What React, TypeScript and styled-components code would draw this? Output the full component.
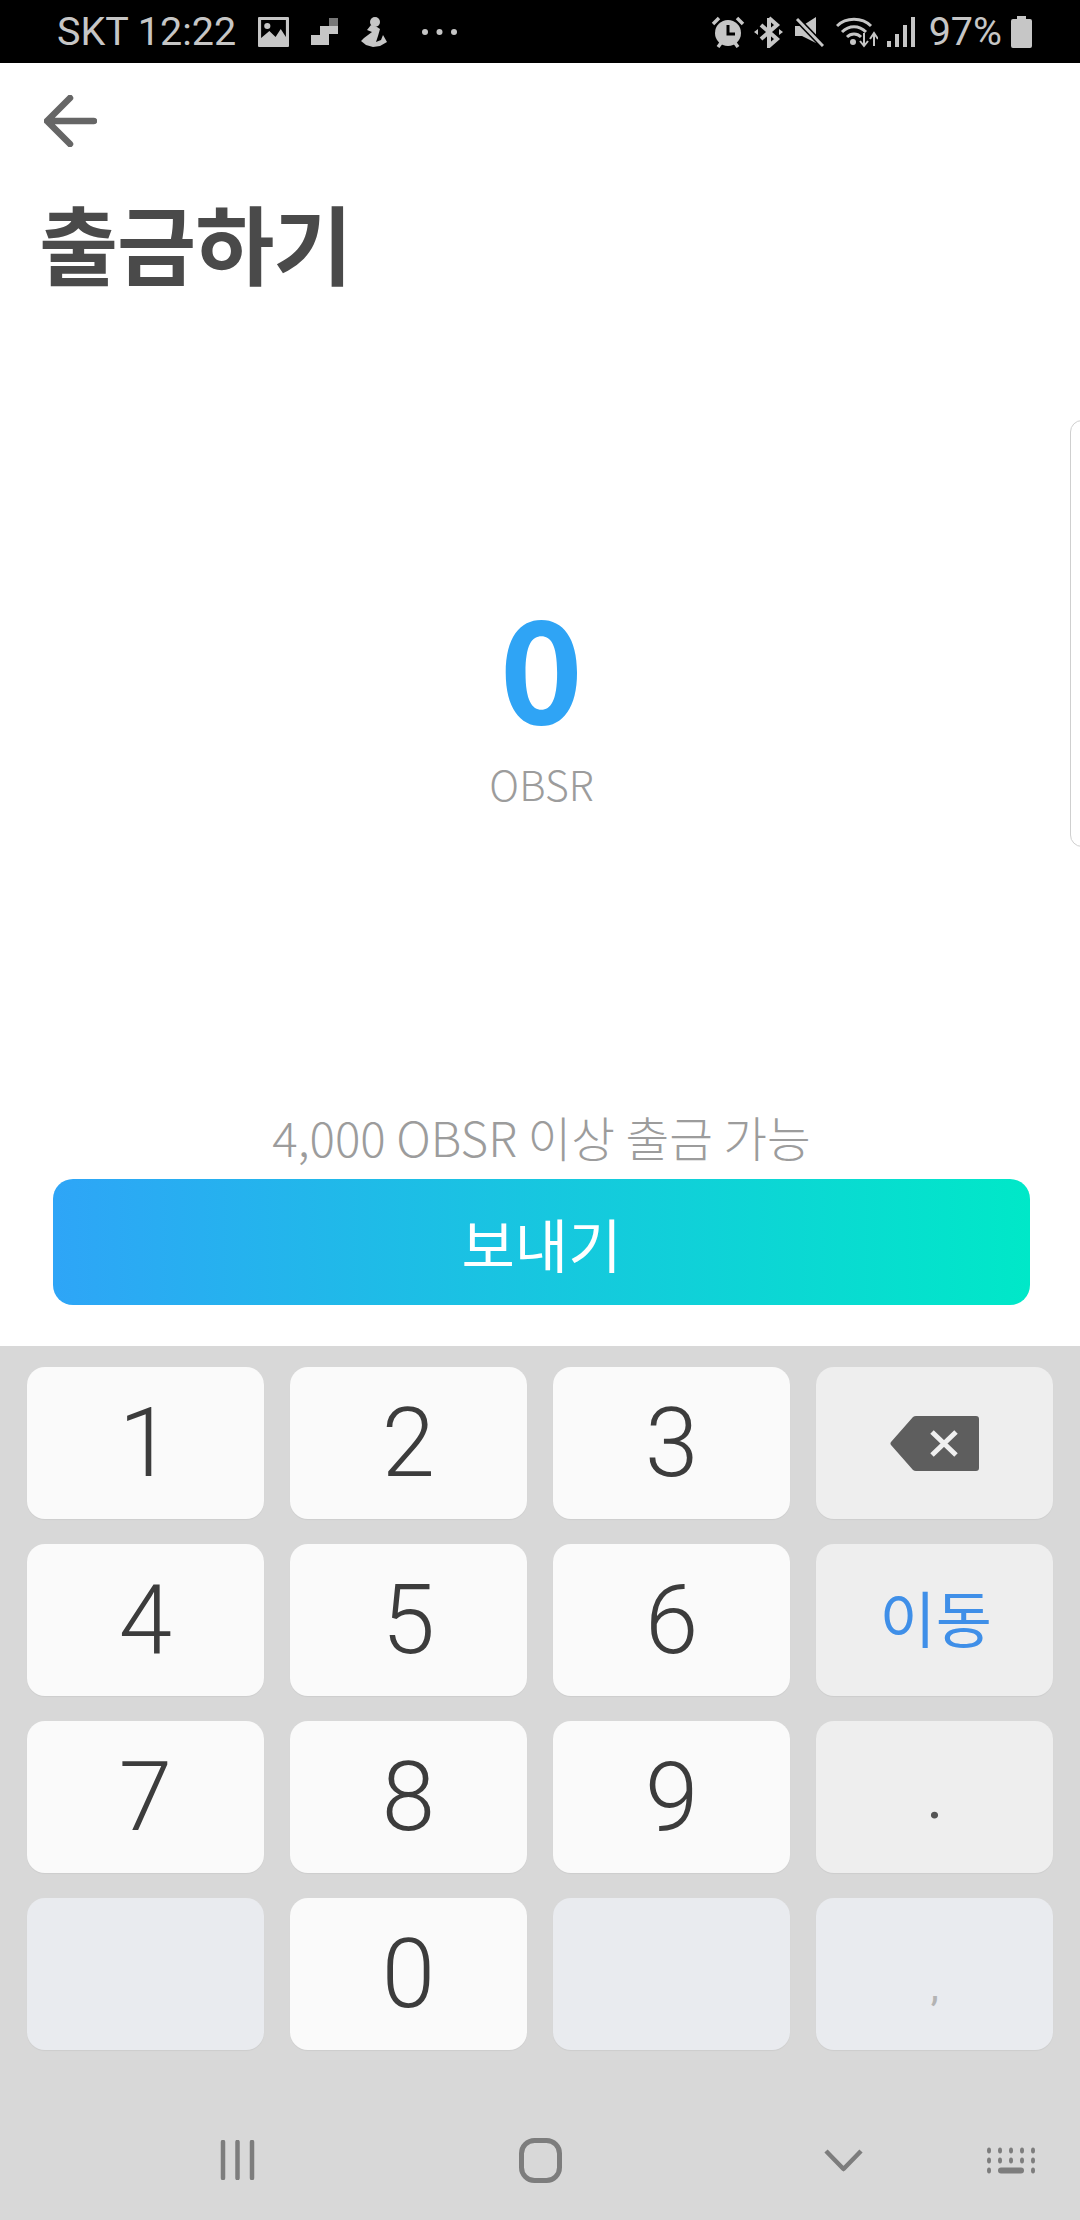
import React from "react";
import styled, { createGlobalStyle } from "styled-components";

const GlobalStyle = createGlobalStyle`
  html, body {
    margin: 0;
    padding: 0;
    background: #fff;
  }
  * {
    box-sizing: border-box;
  }
`;

const Screen = styled.div`
  width: 1080px;
  height: 2220px;
  display: flex;
  flex-direction: column;
  position: relative;
  overflow: hidden;
  font-family: "Noto Sans CJK KR", "Noto Sans", sans-serif;
`;

const StatusBar = styled.div`
  height: 63px;
  flex: none;
  background: #000;
  color: #c6c6c6;
  display: flex;
  align-items: center;
  padding: 0 48px 0 57px;
  font-family: Roboto, sans-serif;
  font-size: 39.500px;
  line-height: 63px;
`;

const StatusText = styled.span<{ $gap?: number }>`
  margin-right: ${(p) => p.$gap ?? 0}px;
  white-space: nowrap;
`;

const StatusIcon = styled.svg<{ $gap?: number }>`
  flex: none;
  margin-right: ${(p) => p.$gap ?? 0}px;
`;

const Spacer = styled.div`
  flex: 1;
`;

const Main = styled.main`
  flex: 1;
  display: flex;
  flex-direction: column;
  padding: 32px 50px 41px 53px;
`;

const BackIcon = styled.svg`
  display: block;
  margin-left: -9px;
`;

const Title = styled.h1`
  margin: 50px 0 0 -14px;
  font-size: 86px;
  line-height: 90px;
  font-weight: 700;
  color: #4a4a4a;
  letter-spacing: -1px;
`;

const Amount = styled.div`
  margin-top: 305px;
  display: flex;
  flex-direction: column;
  align-items: center;
`;

const AmountValue = styled.div`
  font-size: 142px;
  line-height: 140px;
  font-weight: 700;
  color: #2fa4f5;
`;

const AmountUnit = styled.div`
  margin-top: 26px;
  font-size: 41px;
  line-height: 50px;
  font-weight: 300;
  color: #9c9c9c;
`;

const Hint = styled.div`
  margin-top: auto;
  margin-bottom: 12px;
  text-align: center;
  font-size: 47.500px;
  line-height: 60px;
  font-weight: 300;
  color: #9c9c9c;
`;

const SendButton = styled.button`
  height: 126px;
  border: 0;
  border-radius: 20px;
  background: linear-gradient(90deg, #2ea5f7 0%, #00e8c8 100%);
  color: #fff;
  font-family: inherit;
  font-size: 58px;
  font-weight: 400;
  padding: 2px 0 0;
`;

const SideHandle = styled.div`
  position: absolute;
  top: 420px;
  right: -4px;
  width: 14px;
  height: 427px;
  border: 1.500px solid #cfcfcf;
  border-radius: 12px 0 0 12px;
  background: #fff;
`;

const Keyboard = styled.section`
  height: 874px;
  flex: none;
  background: #d8d8d8;
  display: flex;
  flex-direction: column;
`;

const KeyGrid = styled.div`
  display: grid;
  grid-template-columns: repeat(4, 236.500px);
  grid-auto-rows: 152px;
  column-gap: 26.670px;
  row-gap: 25px;
  padding: 21px 27px 0;
`;

const toneColor = {
  digit: "#fafafa",
  action: "#eeeeee",
  blank: "#e9ebef",
};

const Key = styled.div<{ $tone: keyof typeof toneColor }>`
  position: relative;
  display: flex;
  align-items: center;
  justify-content: center;
  border-radius: 18px;
  background: ${(p) => toneColor[p.$tone]};
  box-shadow: 0 1px 1px rgba(0, 0, 0, 0.05);
`;

const Digit = styled.span`
  font-family: Roboto, sans-serif;
  font-weight: 300;
  font-size: 96px;
  line-height: 1;
  color: #3c3c3c;
`;

const GoLabel = styled.span`
  font-size: 61px;
  line-height: 1;
  font-weight: 400;
  color: #3f8fe8;
  margin: -8px 0 0 2px;
`;

const Punct = styled.span<{ $light?: boolean }>`
  position: absolute;
  left: 0;
  right: 0;
  text-align: center;
  font-family: Roboto, sans-serif;
  font-size: ${(p) => (p.$light ? 36 : 52)}px;
  font-weight: 500;
  line-height: 1;
  color: ${(p) => (p.$light ? "#b4b4b4" : "#555")};
  bottom: ${(p) => (p.$light ? 44 : 46)}px;
`;

const NavBar = styled.nav`
  flex: 1;
  display: grid;
  grid-template-columns: 86px 303px 303px 303px 85px;
  justify-items: center;
  align-items: center;
  padding-top: 50px;
`;

const NavIcon = styled.svg<{ $col: number; $shift?: number }>`
  grid-column: ${(p) => p.$col};
  display: block;
  margin-left: ${(p) => p.$shift ?? 0}px;
`;

const keys: { label: string; tone: keyof typeof toneColor; kind?: string }[] = [
  { label: "1", tone: "digit" },
  { label: "2", tone: "digit" },
  { label: "3", tone: "digit" },
  { label: "", tone: "action", kind: "backspace" },
  { label: "4", tone: "digit" },
  { label: "5", tone: "digit" },
  { label: "6", tone: "digit" },
  { label: "이동", tone: "action", kind: "go" },
  { label: "7", tone: "digit" },
  { label: "8", tone: "digit" },
  { label: "9", tone: "digit" },
  { label: ".", tone: "action", kind: "dot" },
  { label: "", tone: "blank" },
  { label: "0", tone: "digit" },
  { label: "", tone: "blank" },
  { label: ",", tone: "blank", kind: "comma" },
];

const BackspaceGlyph = () => (
  <svg width="90" height="57" viewBox="0 0 90 57">
    <path
      d="M26 1H86a3 3 0 0 1 3 3V53a3 3 0 0 1-3 3H26a5 5 0 0 1-3-1L1 30a2.500 2.500 0 0 1 0-3L23 2a5 5 0 0 1 3-1Z"
      fill="#5e5e5e"
    />
    <path d="M42 17 66 40M66 17 42 40" stroke="#f0f0f0" strokeWidth="5" />
  </svg>
);

const renderKey = (k: (typeof keys)[number]) => {
  if (k.kind === "backspace") return <BackspaceGlyph />;
  if (k.kind === "go") return <GoLabel>{k.label}</GoLabel>;
  if (k.kind === "dot") return <Punct>{k.label}</Punct>;
  if (k.kind === "comma") return <Punct $light>{k.label}</Punct>;
  return k.label ? <Digit>{k.label}</Digit> : null;
};

export default function App() {
  return (
    <Screen>
      <GlobalStyle />
      <StatusBar>
        <StatusText $gap={22}>SKT 12:22</StatusText>
        <StatusIcon $gap={22} width="31" height="30" viewBox="0 0 30 30" preserveAspectRatio="none">
          <path
            fillRule="evenodd"
            d="M1 0H29a1 1 0 0 1 1 1V29a1 1 0 0 1-1 1H1a1 1 0 0 1-1-1V1a1 1 0 0 1 1-1ZM3 3V21L11 14 17 20 22 12 27 20V3Z"
            fill="#c6c6c6"
          />
          <circle cx="9" cy="9" r="3" fill="#c6c6c6" />
        </StatusIcon>
        <StatusIcon $gap={23} width="27" height="27" viewBox="0 0 27 27">
          <path d="M18 0H27V8H18Z" fill="#777" />
          <path d="M18 8H27V16H18V27H0V17H9V8H18Z" fill="#c6c6c6" />
        </StatusIcon>
        <StatusIcon $gap={35} width="26" height="30" viewBox="0 0 26 30">
          <circle cx="14" cy="5" r="5" fill="#c6c6c6" />
          <path
            d="M10 8 6 13 11 15 3 21 0 24 5 28 12 30 19 29 26 25 22 18 20 23 15 25 17 19 19 12 16 10Z"
            fill="#c6c6c6"
          />
        </StatusIcon>
        <StatusIcon width="35" height="8" viewBox="0 0 35 8">
          <circle cx="3" cy="4" r="3" fill="#c6c6c6" />
          <circle cx="17.500" cy="4" r="3" fill="#c6c6c6" />
          <circle cx="32" cy="4" r="3" fill="#c6c6c6" />
        </StatusIcon>
        <Spacer />
        <StatusIcon $gap={9} width="34" height="32" viewBox="0 0 34 32">
          <circle cx="17" cy="17" r="13" fill="#c6c6c6" />
          <path d="M17 9V18H24" stroke="#000" strokeWidth="3" fill="none" />
          <path
            d="M2 8 8 2M32 8 26 2M7 31 10 27M27 31 24 27"
            stroke="#c6c6c6"
            strokeWidth="3.500"
          />
        </StatusIcon>
        <StatusIcon $gap={12} width="29" height="32" viewBox="0 0 29 32">
          <path
            d="M15 2V30L23 23 7 9M15 2 23 9 7 23"
            stroke="#c6c6c6"
            strokeWidth="4"
            fill="none"
          />
          <path d="M0 16 4 13V19ZM29 16 25 13V19Z" fill="#c6c6c6" />
        </StatusIcon>
        <StatusIcon $gap={12} width="29" height="30" viewBox="0 0 29 30">
          <path d="M0 9H7L21 0V26L7 19H0Z" fill="#c6c6c6" />
          <path d="M2 2 28 29" stroke="#000" strokeWidth="6" />
          <path d="M2 2 28 29" stroke="#c6c6c6" strokeWidth="3" />
        </StatusIcon>
        <StatusIcon $gap={9} width="42" height="32" viewBox="0 0 42 32">
          <path
            d="M1 10C10 1 26 1 35 10M6 16C13 9 23 9 30 16M11 21C15 17 21 17 25 21"
            stroke="#c6c6c6"
            strokeWidth="3"
            fill="none"
          />
          <circle cx="17" cy="26" r="3" fill="#c6c6c6" />
          <path
            d="M28 17V29M24 25 28 30 32 25M38 30V19M34 23 38 17 42 23"
            stroke="#c6c6c6"
            strokeWidth="2"
            fill="none"
          />
        </StatusIcon>
        <StatusIcon $gap={14} width="28" height="30" viewBox="0 0 28 30">
          <path
            d="M0 24H4V30H0ZM8 17H12V30H8ZM16 8H20V30H16ZM24 0H28V30H24Z"
            fill="#c6c6c6"
          />
        </StatusIcon>
        <StatusText $gap={9}>97%</StatusText>
        <StatusIcon width="21" height="32" viewBox="0 0 21 32">
          <path
            d="M6 0H15V3H19a2 2 0 0 1 2 2V30a2 2 0 0 1-2 2H2a2 2 0 0 1-2-2V5a2 2 0 0 1 2-2H6Z"
            fill="#c6c6c6"
          />
        </StatusIcon>
      </StatusBar>

      <Main>
        <BackIcon width="53" height="52" viewBox="0 0 53 52">
          <path
            d="M26 3 3 26 26 49M3 26H50"
            stroke="#666"
            strokeWidth="6.500"
            strokeLinecap="round"
            strokeLinejoin="round"
            fill="none"
          />
        </BackIcon>
        <Title>출금하기</Title>
        <Amount>
          <AmountValue>0</AmountValue>
          <AmountUnit>OBSR</AmountUnit>
        </Amount>
        <Hint>4,000 OBSR 이상 출금 가능</Hint>
        <SendButton>보내기</SendButton>
      </Main>
      <SideHandle />

      <Keyboard>
        <KeyGrid>
          {keys.map((k, i) => (
            <Key key={i} $tone={k.tone}>
              {renderKey(k)}
            </Key>
          ))}
        </KeyGrid>
        <NavBar>
          <NavIcon $col={2} width="35" height="40" viewBox="0 0 35 40">
            <path
              d="M3 2V38M17.500 2V38M32 2V38"
              stroke="#7d7d7d"
              strokeWidth="4.500"
              strokeLinecap="round"
            />
          </NavIcon>
          <NavIcon $col={3} width="43" height="45" viewBox="0 0 43 45">
            <rect
              x="2.500"
              y="2.500"
              width="38"
              height="40"
              rx="13"
              stroke="#7d7d7d"
              strokeWidth="5"
              fill="none"
            />
          </NavIcon>
          <NavIcon $col={4} width="39" height="23" viewBox="0 0 39 23">
            <path
              d="M2 2 19.500 20 37 2"
              stroke="#7d7d7d"
              strokeWidth="4.500"
              strokeLinejoin="round"
              fill="none"
            />
          </NavIcon>
          <NavIcon $col={5} $shift={-53} width="50" height="27" viewBox="0 0 50 27">
            <g fill="#7d7d7d">
              {[3, 14, 25, 36, 47].map((x) => (
                <ellipse key={x} cx={x} cy="3.500" rx="2" ry="3" />
              ))}
              {[3, 14, 25, 36, 47].map((x) => (
                <ellipse key={x} cx={x} cy="13.500" rx="2" ry="3" />
              ))}
              <ellipse cx="3" cy="23.500" rx="2" ry="3" />
              <ellipse cx="47" cy="23.500" rx="2" ry="3" />
              <rect x="12" y="20.500" width="26" height="6" rx="3" />
            </g>
          </NavIcon>
        </NavBar>
      </Keyboard>
    </Screen>
  );
}
